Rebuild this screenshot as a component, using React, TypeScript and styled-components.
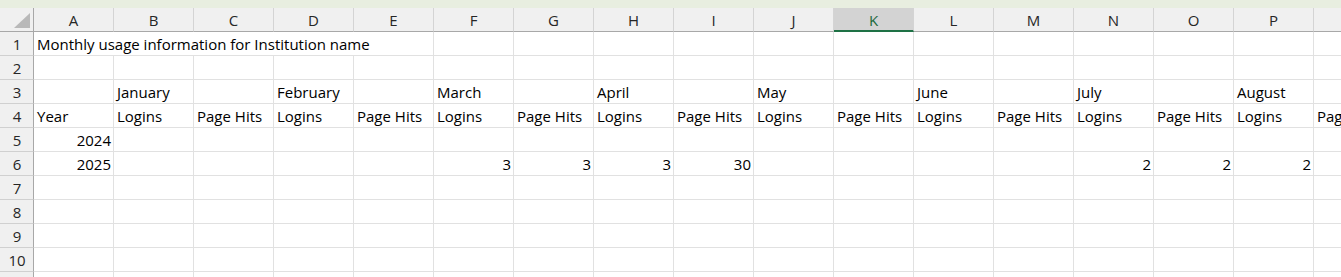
import React from "react";
import styled, { createGlobalStyle } from "styled-components";

const GlobalStyle = createGlobalStyle`
  html, body { margin: 0; padding: 0; background: #ffffff; overflow: hidden; }
  body { font-family: "Open Sans", "Noto Sans", sans-serif; }
`;

const COLS = ["A", "B", "C", "D", "E", "F", "G", "H", "I", "J", "K", "L", "M", "N", "O", "P", "Q"];
const ACTIVE_COL = "K";

type CellData = { text: string; align?: "left" | "right"; span?: number };
type RowData = Record<string, CellData>;

const months = ["January", "February", "March", "April", "May", "June", "July", "August"];
const monthCols = ["B", "D", "F", "H", "J", "L", "N", "P"];

const row3: RowData = {};
monthCols.forEach((c, i) => (row3[c] = { text: months[i] }));

const row4: RowData = { A: { text: "Year" } };
COLS.slice(1).forEach((c, i) => (row4[c] = { text: i % 2 === 0 ? "Logins" : "Page Hits" }));

const rows: RowData[] = [
  { A: { text: "Monthly usage information for Institution name", span: 5 } },
  {},
  row3,
  row4,
  { A: { text: "2024", align: "right" } },
  {
    A: { text: "2025", align: "right" },
    F: { text: "3", align: "right" },
    G: { text: "3", align: "right" },
    H: { text: "3", align: "right" },
    I: { text: "30", align: "right" },
    N: { text: "2", align: "right" },
    O: { text: "2", align: "right" },
    P: { text: "2", align: "right" },
  },
  {},
  {},
  {},
  {},
  {},
];

const Page = styled.div`
  width: 1341px;
  height: 277px;
  overflow: hidden;
  display: flex;
  flex-direction: column;
`;

const TopStrip = styled.div`
  height: 8px;
  flex: 0 0 8px;
  background: #e8eee0;
`;

const Sheet = styled.div`
  display: grid;
  grid-template-columns: 34px repeat(17, 80px);
  grid-auto-rows: 24px;
  font-family: "Open Sans", "Noto Sans", sans-serif;
  font-size: 15px;
  line-height: 20px;
  color: #000000;
`;

const Corner = styled.div`
  box-sizing: border-box;
  background: #f0f0f0;
  border-right: 1px solid #a8a8a8;
  border-bottom: 1px solid #a8a8a8;
  display: flex;
  justify-content: flex-end;
  align-items: flex-end;
  padding: 0 3px 3px 0;
`;

const ColHeader = styled.div<{ $active?: boolean }>`
  box-sizing: border-box;
  background: ${(p) => (p.$active ? "#d3d3d3" : "#f0f0f0")};
  color: ${(p) => (p.$active ? "#1b6a3c" : "#262626")};
  border-right: 1px solid #d4d4d4;
  border-bottom: ${(p) => (p.$active ? "2px solid #1e7145" : "1px solid #a8a8a8")};
  display: flex;
  align-items: center;
  justify-content: center;
  padding-top: ${(p) => (p.$active ? "1px" : "0")};
`;

const RowHeader = styled.div`
  box-sizing: border-box;
  background: #f0f0f0;
  color: #262626;
  border-right: 1px solid #a8a8a8;
  border-bottom: 1px solid #d0d0d0;
  display: flex;
  align-items: flex-end;
  justify-content: center;
  padding-bottom: 1px;
  padding-left: 1px;
`;

const Cell = styled.div<{ $align?: "left" | "right"; $span?: number }>`
  box-sizing: border-box;
  grid-column: span ${(p) => p.$span ?? 1};
  border-right: 1px solid #e1e1e1;
  border-bottom: 1px solid #e1e1e1;
  display: flex;
  align-items: flex-end;
  justify-content: ${(p) => (p.$align === "right" ? "flex-end" : "flex-start")};
  padding: 0 2px 1px 3px;
  white-space: nowrap;
  overflow: hidden;
`;

function CornerMark() {
  return (
    <svg width="16" height="15" viewBox="0 0 16 15" aria-hidden="true">
      <polygon points="0,15 16,0 16,15" fill="#b9b9b9" />
    </svg>
  );
}

function SheetRow({ index, data }: { index: number; data: RowData }) {
  const cells: React.ReactNode[] = [];
  let i = 0;
  while (i < COLS.length) {
    const col = COLS[i];
    const cell = data[col];
    const span = cell?.span ?? 1;
    cells.push(
      <Cell key={col} $align={cell?.align} $span={span}>
        {cell?.text ?? ""}
      </Cell>
    );
    i += span;
  }
  return (
    <>
      <RowHeader>{index}</RowHeader>
      {cells}
    </>
  );
}

export default function App() {
  return (
    <>
      <GlobalStyle />
      <Page>
        <TopStrip />
        <Sheet>
          <Corner>
            <CornerMark />
          </Corner>
          {COLS.map((c) => (
            <ColHeader key={c} $active={c === ACTIVE_COL}>
              {c}
            </ColHeader>
          ))}
          {rows.map((r, idx) => (
            <SheetRow key={idx} index={idx + 1} data={r} />
          ))}
        </Sheet>
      </Page>
    </>
  );
}
